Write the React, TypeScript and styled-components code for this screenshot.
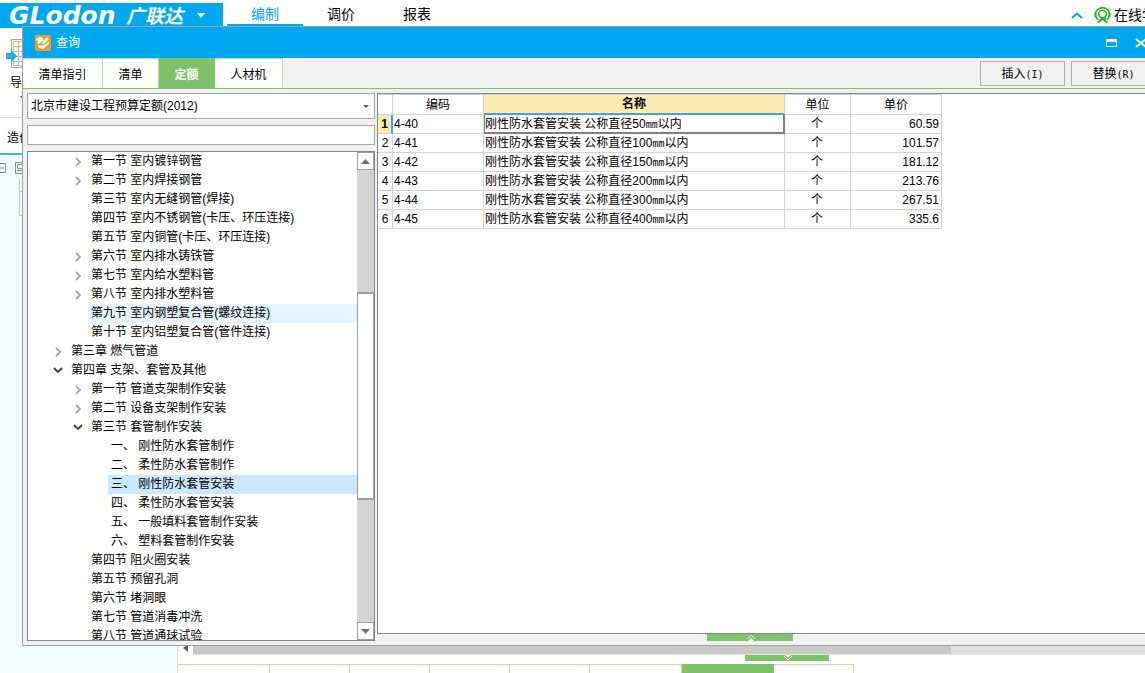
import React from 'react';
import styled, { createGlobalStyle, css } from 'styled-components';

const sky = '#00a8f0';
const leaf = '#80c269';
const leafPale = '#b5e29c';
const sans = `'Liberation Sans', 'Noto Sans CJK SC', sans-serif`;

const GlobalStyle = createGlobalStyle`
  * { box-sizing: border-box; }
  body { margin: 0; background: #fff; color: #000; font: 12px/18px ${sans}; overflow: hidden; }
  button, input, select { font: inherit; color: inherit; margin: 0; border-radius: 0; }
  ul { list-style: none; margin: 0; padding: 0; }
  svg { display: block; flex: none; }
`;

const Page = styled.div`
  position: relative;
  display: flex;
  flex-direction: column;
  width: calc(100% + 30px);
  height: 100vh;
  white-space: nowrap;
`;

/* ---------- main window behind the dialog ---------- */

const TopBar = styled.header`
  display: flex;
  flex: none;
  height: 28px;
  padding-top: 3px;
`;

const Brand = styled.button`
  display: flex;
  align-items: center;
  width: 223px;
  padding: 0 0 0 9px;
  border: 0;
  background: ${sky};
  color: #fff;
  text-align: left;
`;

const BrandLatin = styled.span`
  width: 117px;
  font: italic bold 25px/24px 'DejaVu Sans', sans-serif;
`;

const BrandHan = styled.span`
  width: 71px;
  padding-bottom: 2px;
  font: italic bold 19px/22px 'Noto Sans CJK SC', sans-serif;
`;

const MainTabs = styled.nav`
  display: flex;
  height: 23px;
  margin-left: 4px;
`;

const MainTab = styled.button<{ $active?: boolean }>`
  width: 76px;
  padding: 0;
  border: 0;
  border-bottom: 2px solid ${p => (p.$active ? sky : 'transparent')};
  background: none;
  color: ${p => (p.$active ? sky : '#000')};
  font-size: 14px;
  line-height: 20px;
`;

const TopTools = styled.div`
  display: flex;
  align-items: center;
  gap: 11px;
  height: 24px;
  margin-left: auto;
  padding-right: 5px;
`;

const HelpLink = styled.a`
  display: flex;
  align-items: center;
  gap: 3px;
  color: #000;
  font-size: 14px;
  text-decoration: none;
`;

const Ribbon = styled.div`
  flex: none;
  height: 90px;
  padding: 10px 0 0 6px;
  border-bottom: 1px solid #dcdcdc;
`;

const RibbonButton = styled.button`
  display: flex;
  flex-direction: column;
  gap: 5px;
  align-items: flex-start;
  padding: 0;
  border: 0;
  background: none;
`;

const RibbonLabel = styled.span`
  display: flex;
  flex-direction: column;
  gap: 4px;
  align-items: center;
  padding-left: 4px;
`;

const SubBar = styled.div`
  flex: none;
  height: 37px;
  padding: 11px 0 0 7px;
  border-bottom: 2px solid #3db3e3;
`;

const Work = styled.div`
  display: flex;
  flex: 1;
  min-height: 0;
`;

const ProjectTree = styled.aside`
  width: 178px;
  padding-top: 6px;
  border-right: 1px solid #dcdcdc;
  background: #f0fdff;
`;

const WorkPane = styled.div`
  display: flex;
  flex: 1;
  flex-direction: column;
  justify-content: flex-end;
`;

const HScroll = styled.div`
  display: flex;
  height: 13px;
  background: #e1e1e1;
`;

const HScrollButton = styled.button`
  display: flex;
  align-items: center;
  width: 15px;
  padding: 0 0 2px 5px;
  border: 0;
  background: #fff;
`;

const HScrollThumb = styled.div`
  width: 758px;
  height: 12px;
  background: #c9c9c9;
`;

const Handle = styled.button<{ $h: number; $w: number }>`
  display: flex;
  justify-content: center;
  width: ${p => p.$w}px;
  height: ${p => p.$h}px;
  padding: 0 0 0 2px;
  border: 0;
  background: ${leaf};
`;

const LowerHandleRow = styled.div`
  height: 9px;
  padding-left: 567px;
`;

const BottomTabs = styled.div`
  display: flex;
  height: 9px;
`;

const BottomTab = styled.button<{ $w: number; $active?: boolean }>`
  width: ${p => p.$w}px;
  padding: 0;
  border: solid ${leafPale};
  border-width: 1px 1px 0 0;
  background: #fff;
  ${p => p.$active && css`border-color: ${leaf}; background: ${leaf};`}
`;

/* ---------- query dialog ---------- */

const Dialog = styled.section`
  position: absolute;
  top: 26px;
  right: 13px;
  bottom: 27px;
  left: 22px;
  display: flex;
  flex-direction: column;
  border: 1px solid #a0a0a0;
  background: #f1f1f1;
`;

const TitleBar = styled.div`
  display: flex;
  flex: none;
  align-items: center;
  gap: 5px;
  height: 31px;
  padding: 0 14px 0 12px;
  background: ${sky};
  color: #fff;
`;

const WindowButtons = styled.div`
  display: flex;
  gap: 18px;
  margin-left: auto;
`;

const IconButton = styled.button`
  padding: 0;
  border: 0;
  background: none;
`;

const TabBar = styled.div`
  display: flex;
  flex: none;
  height: 31px;
  border-bottom: 1px solid ${leaf};
`;

const Tab = styled.button<{ $w: number; $active?: boolean }>`
  width: ${p => p.$w}px;
  padding: 3px 0 0;
  border: solid ${leafPale};
  border-width: 1px 1px 0 0;
  background: #fff;
  ${p => p.$active && css`
    border-color: ${leaf};
    background: ${leaf};
    color: #fff;
    font-weight: bold;
  `}
`;

const Actions = styled.div`
  display: flex;
  gap: 6px;
  margin-left: auto;
  padding: 3px 5px 0 0;
`;

const ActionButton = styled.button`
  width: 85px;
  height: 25px;
  padding: 0;
  border: 1px solid #adadad;
  background: #f1f1f1;
`;

const Mono = styled.span`
  font: 10px/10px 'DejaVu Sans Mono', monospace;
`;

const DialogBody = styled.div`
  display: flex;
  flex: 1;
  gap: 2px;
  min-height: 0;
  padding: 4px 0 4px 4px;
`;

const LeftPane = styled.div`
  display: flex;
  flex: none;
  flex-direction: column;
  width: 348px;
`;

const Picker = styled.div`
  display: flex;
  align-items: center;
  height: 26px;
  padding-right: 5px;
  border: 1px solid #a5a5a5;
  background: #fff;
`;

const Select = styled.select`
  flex: 1;
  height: 24px;
  padding: 0 3px;
  border: 0;
  outline: 0;
  background: none;
  appearance: none;
`;

const Search = styled.input`
  flex: none;
  height: 20px;
  margin: 6px 0;
  padding: 0 3px;
  border: 1px solid #a5a5a5;
  outline: 0;
  background: #fff;
`;

const TreeBox = styled.div`
  display: flex;
  flex: 1;
  min-height: 0;
  border: 1px solid #828790;
  background: #fff;
`;

const TreeList = styled.ul`
  flex: 1;
  overflow: hidden;
`;

const TreeRow = styled.li<{ $level: number }>`
  display: flex;
  align-items: center;
  height: 19px;
  padding-left: ${p => p.$level * 20}px;
`;

const Twisty = styled.span`
  display: flex;
  justify-content: center;
  width: 20px;
`;

const TreeLabel = styled.span<{ $tone?: string }>`
  flex: 1;
  height: 19px;
  padding-left: 3px;
  background: ${p => p.$tone || 'none'};
  line-height: 18px;
`;

const VScroll = styled.div`
  display: flex;
  flex-direction: column;
  width: 17px;
  background: #d3d3d3;
`;

const VScrollButton = styled.button`
  display: flex;
  align-items: center;
  justify-content: center;
  height: 18px;
  padding: 0;
  border: 1px solid #a0a0a0;
  background: #fff;
`;

const VTrack = styled.div`
  flex: 1;
  padding-top: 122px;
`;

const VThumb = styled.div`
  height: 208px;
  border: 1px solid #a0a0a0;
  border-width: 2px 1px;
  background: #fff;
`;

const RightPane = styled.div`
  display: flex;
  flex: 1;
  flex-direction: column;
`;

const GridBox = styled.div`
  flex: 1;
  border: 1px solid #828790;
  background: #fff;
`;

const Grid = styled.table`
  width: 564px;
  border-collapse: separate;
  border-spacing: 0;
  border-top: 1px solid #d3d3d3;
  table-layout: fixed;
`;

const cell = css`
  border: solid #d3d3d3;
  border-width: 0 1px 1px 0;
  font-weight: normal;
`;

const HeadCell = styled.th<{ $active?: boolean }>`
  ${cell}
  height: 20px;
  padding: 0;
  line-height: 18px;
  ${p => p.$active && css`
    border-bottom: 2px solid #3ba7d3;
    background: #ffecb3;
    font-weight: bold;
  `}
`;

const RowHead = styled.th<{ $active?: boolean }>`
  ${cell}
  padding: 0;
  ${p => p.$active && css`
    border-right: 2px solid #3ba7d3;
    background: #ffecb3;
    font-weight: bold;
  `}
`;

const Cell = styled.td<{ $align?: string; $focus?: boolean }>`
  ${cell}
  height: 19px;
  padding: 0 2px 0 1px;
  line-height: 18px;
  text-align: ${p => p.$align || 'left'};
  ${p => p.$focus && css`box-shadow: inset 1px 0 #808080, inset -1px -1px #808080; border-color: #808080;`}
`;

const UpperHandleRow = styled.div`
  height: 7px;
  padding-left: 330px;
`;

type Node = { level: number; text: string; open?: boolean; closed?: boolean; tone?: string };

const nodes: Node[] = [
  { level: 2, text: '第一节 室内镀锌钢管', closed: true },
  { level: 2, text: '第二节 室内焊接钢管', closed: true },
  { level: 2, text: '第三节 室内无缝钢管(焊接)' },
  { level: 2, text: '第四节 室内不锈钢管(卡压、环压连接)' },
  { level: 2, text: '第五节 室内铜管(卡压、环压连接)' },
  { level: 2, text: '第六节 室内排水铸铁管', closed: true },
  { level: 2, text: '第七节 室内给水塑料管', closed: true },
  { level: 2, text: '第八节 室内排水塑料管', closed: true },
  { level: 2, text: '第九节 室内钢塑复合管(螺纹连接)', tone: '#e5f3ff' },
  { level: 2, text: '第十节 室内铝塑复合管(管件连接)' },
  { level: 1, text: '第三章 燃气管道', closed: true },
  { level: 1, text: '第四章 支架、套管及其他', open: true },
  { level: 2, text: '第一节 管道支架制作安装', closed: true },
  { level: 2, text: '第二节 设备支架制作安装', closed: true },
  { level: 2, text: '第三节 套管制作安装', open: true },
  { level: 3, text: '一、 刚性防水套管制作' },
  { level: 3, text: '二、 柔性防水套管制作' },
  { level: 3, text: '三、 刚性防水套管安装', tone: '#cce8ff' },
  { level: 3, text: '四、 柔性防水套管安装' },
  { level: 3, text: '五、 一般填料套管制作安装' },
  { level: 3, text: '六、 塑料套管制作安装' },
  { level: 2, text: '第四节 阻火圈安装' },
  { level: 2, text: '第五节 预留孔洞' },
  { level: 2, text: '第六节 堵洞眼' },
  { level: 2, text: '第七节 管道消毒冲洗' },
  { level: 2, text: '第八节 管道通球试验' },
];

const items = [
  { code: '4-40', size: 50, price: '60.59' },
  { code: '4-41', size: 100, price: '101.57' },
  { code: '4-42', size: 150, price: '181.12' },
  { code: '4-43', size: 200, price: '213.76' },
  { code: '4-44', size: 300, price: '267.51' },
  { code: '4-45', size: 400, price: '335.6' },
];

const Triangle = ({ dir, color = '#6b6f80' }: { dir: 'up' | 'down'; color?: string }) => (
  <svg width="9" height="5" viewBox="0 0 9 5">
    <path d={dir === 'up' ? 'M0 5L4.500 0L9 5Z' : 'M0 0L4.500 5L9 0Z'} fill={color} />
  </svg>
);

const Chevron = ({ open }: { open?: boolean }) =>
  open ? (
    <svg width="10" height="7" viewBox="0 0 10 7"><path d="M1 1L5 5L9 1" fill="none" stroke="#404040" strokeWidth="1.800" /></svg>
  ) : (
    <svg width="7" height="10" viewBox="0 0 7 10"><path d="M1 1L5 5L1 9" fill="none" stroke="#a6a6a6" strokeWidth="1.800" /></svg>
  );

const ImportIcon = () => (
  <svg width="34" height="31" viewBox="0 0 34 31">
    <path d="M5.500 1.500H32.500V29.500H5.500Z" fill="#fff" stroke="#a5a5a5" />
    <path d="M7.500 13.500H30M7.500 18.500H30M7.500 23.500H30M7.500 27.500H30M7.500 9V28M12.500 9V28M18.500 9V28M24.500 9V28" stroke="#b5b5b5" fill="none" />
    <path d="M7.500 3.500H30.500V8.500H7.500ZM12.500 4V8M18.500 4V8M24.500 4V8" fill="none" stroke="#f5c04a" />
    <path d="M0 15H5V12L11 18L5 24V21H0Z" fill="#19b2ea" />
  </svg>
);

const ProjectNodes = () => (
  <svg width="40" height="60" viewBox="0 0 40 60">
    <path d="M-3.500 2.500H5.500V11.500H-3.500Z" fill="#fff" stroke="#8a8a8a" />
    <path d="M-1 7H4" stroke="#2c9fd8" />
    <path d="M15.500 1.500H30V12.500H15.500Z" fill="#fff6d0" stroke="#808890" />
    <path d="M17.500 3.500H28V7.500H17.500Z" fill="#fff" stroke="#5aa0d8" />
    <path d="M17 9.500H30" stroke="#808890" />
    <path d="M19.500 18V55M20 30.500H30M20 54.500H30" stroke="#c8c8c8" fill="none" />
  </svg>
);

const HeadsetIcon = () => (
  <svg width="17" height="17" viewBox="0 0 17 17" fill="none" stroke="#21b321">
    <path d="M4 13A7 7 0 1 1 13 13" strokeWidth="1.500" />
    <circle cx="8.500" cy="7" r="3.800" strokeWidth="1.500" />
    <path d="M1.500 6V10M15.500 6V10" strokeWidth="2" />
    <path d="M4 15.500L8.500 11.500L13 15.500M9 13L12 11" strokeWidth="2" />
  </svg>
);

const DialogIcon = () => (
  <svg width="16" height="16" viewBox="0 0 16 16">
    <rect width="16" height="16" rx="2" fill="#f79a1c" />
    <path d="M1 4L5 2L8 3L8 6L4 9L2 8L4 5L2 6Z" fill="#fff" />
    <path d="M8 6L12 2L14 4L9 9L7 9Z" fill="#fff" />
    <path d="M3 10L6 10L7 11L14 7L14 9L8 14L4 13Z" fill="#fff" />
  </svg>
);

export default function App() {
  return (
    <Page>
      <GlobalStyle />
      <TopBar>
        <Brand>
          <BrandLatin>GLodon</BrandLatin>
          <BrandHan>广联达</BrandHan>
          <svg width="8" height="5" viewBox="0 0 8 5"><path d="M0 0H8L4 5Z" fill="#fff" /></svg>
        </Brand>
        <MainTabs>
          <MainTab $active>编制</MainTab>
          <MainTab>调价</MainTab>
          <MainTab>报表</MainTab>
        </MainTabs>
        <TopTools>
          <IconButton aria-label="收起">
            <svg width="12" height="7" viewBox="0 0 12 7"><path d="M1 6L6 1.500L11 6" fill="none" stroke={sky} strokeWidth="2" /></svg>
          </IconButton>
          <HelpLink href="#"><HeadsetIcon />在线学习</HelpLink>
        </TopTools>
      </TopBar>
      <Ribbon>
        <RibbonButton>
          <ImportIcon />
          <RibbonLabel>
            导入
            <svg width="5" height="3" viewBox="0 0 5 3"><path d="M0 0H5L2.500 3Z" fill="#505050" /></svg>
          </RibbonLabel>
        </RibbonButton>
      </Ribbon>
      <SubBar>造价分析</SubBar>
      <Work>
        <ProjectTree><ProjectNodes /></ProjectTree>
        <WorkPane>
          <HScroll>
            <HScrollButton aria-label="向左">
              <svg width="5" height="8" viewBox="0 0 5 8"><path d="M5 0V8L0 4Z" fill="#606060" /></svg>
            </HScrollButton>
            <HScrollThumb />
          </HScroll>
          <LowerHandleRow>
            <Handle $w={84} $h={6} aria-label="展开">
              <svg width="10" height="6" viewBox="0 0 10 6" fill="none" stroke="#dff2d6"><path d="M1 1L5 5L9 1" /><path d="M2 0H8L5 2.500Z" fill="#fff" stroke="none" /></svg>
            </Handle>
          </LowerHandleRow>
          <BottomTabs>
            {[92, 80, 80, 80, 80, 92].map((w, i) => <BottomTab key={i} $w={w} tabIndex={-1} />)}
            <BottomTab $w={92} $active tabIndex={-1} />
            <BottomTab $w={80} tabIndex={-1} />
          </BottomTabs>
        </WorkPane>
      </Work>

      <Dialog role="dialog" aria-label="查询">
        <TitleBar>
          <DialogIcon />
          查询
          <WindowButtons>
            <IconButton aria-label="最大化">
              <svg width="11" height="10" viewBox="0 0 11 10"><path d="M0 1H11V9H0Z M1 4V8H10V4Z" fill="#fff" fillRule="evenodd" /></svg>
            </IconButton>
            <IconButton aria-label="关闭">
              <svg width="12" height="10" viewBox="0 0 12 10"><path d="M1 1L11 9M11 1L1 9" stroke="#fff" strokeWidth="2" /></svg>
            </IconButton>
          </WindowButtons>
        </TitleBar>
        <TabBar>
          <Tab $w={80}>清单指引</Tab>
          <Tab $w={56}>清单</Tab>
          <Tab $w={56} $active>定额</Tab>
          <Tab $w={68}>人材机</Tab>
          <Actions>
            <ActionButton>插入<Mono>(I)</Mono></ActionButton>
            <ActionButton>替换<Mono>(R)</Mono></ActionButton>
          </Actions>
        </TabBar>
        <DialogBody>
          <LeftPane>
            <Picker>
              <Select aria-label="定额库"><option>北京市建设工程预算定额(2012)</option></Select>
              <svg width="6" height="3" viewBox="0 0 6 3"><path d="M0 0H6L3 3Z" fill="#606470" /></svg>
            </Picker>
            <Search aria-label="搜索" />
            <TreeBox>
              <TreeList>
                {nodes.map((n, i) => (
                  <TreeRow key={i} $level={n.level}>
                    <Twisty>{(n.open || n.closed) && <Chevron open={n.open} />}</Twisty>
                    <TreeLabel $tone={n.tone}>{n.text}</TreeLabel>
                  </TreeRow>
                ))}
              </TreeList>
              <VScroll>
                <VScrollButton aria-label="向上"><Triangle dir="up" /></VScrollButton>
                <VTrack><VThumb /></VTrack>
                <VScrollButton aria-label="向下"><Triangle dir="down" /></VScrollButton>
              </VScroll>
            </TreeBox>
          </LeftPane>
          <RightPane>
            <GridBox>
              <Grid>
                <colgroup>
                  {[15, 91, 301, 66, 91].map((w, i) => <col key={i} width={w} />)}
                </colgroup>
                <thead>
                  <tr>
                    <HeadCell />
                    <HeadCell>编码</HeadCell>
                    <HeadCell $active>名称</HeadCell>
                    <HeadCell>单位</HeadCell>
                    <HeadCell>单价</HeadCell>
                  </tr>
                </thead>
                <tbody>
                  {items.map((it, i) => (
                    <tr key={it.code}>
                      <RowHead scope="row" $active={i === 0}>{i + 1}</RowHead>
                      <Cell>{it.code}</Cell>
                      <Cell $focus={i === 0}>刚性防水套管安装 公称直径{it.size}<Mono>mm</Mono>以内</Cell>
                      <Cell $align="center">个</Cell>
                      <Cell $align="right">{it.price}</Cell>
                    </tr>
                  ))}
                </tbody>
              </Grid>
            </GridBox>
            <UpperHandleRow>
              <Handle $w={86} $h={7} aria-label="收起">
                <svg width="10" height="7" viewBox="0 0 10 7" fill="none" stroke="#dff2d6"><path d="M1 5L5 1L9 5" /><path d="M2 7L5 4L8 7Z" fill="#fff" stroke="none" /></svg>
              </Handle>
            </UpperHandleRow>
          </RightPane>
        </DialogBody>
      </Dialog>
    </Page>
  );
}
